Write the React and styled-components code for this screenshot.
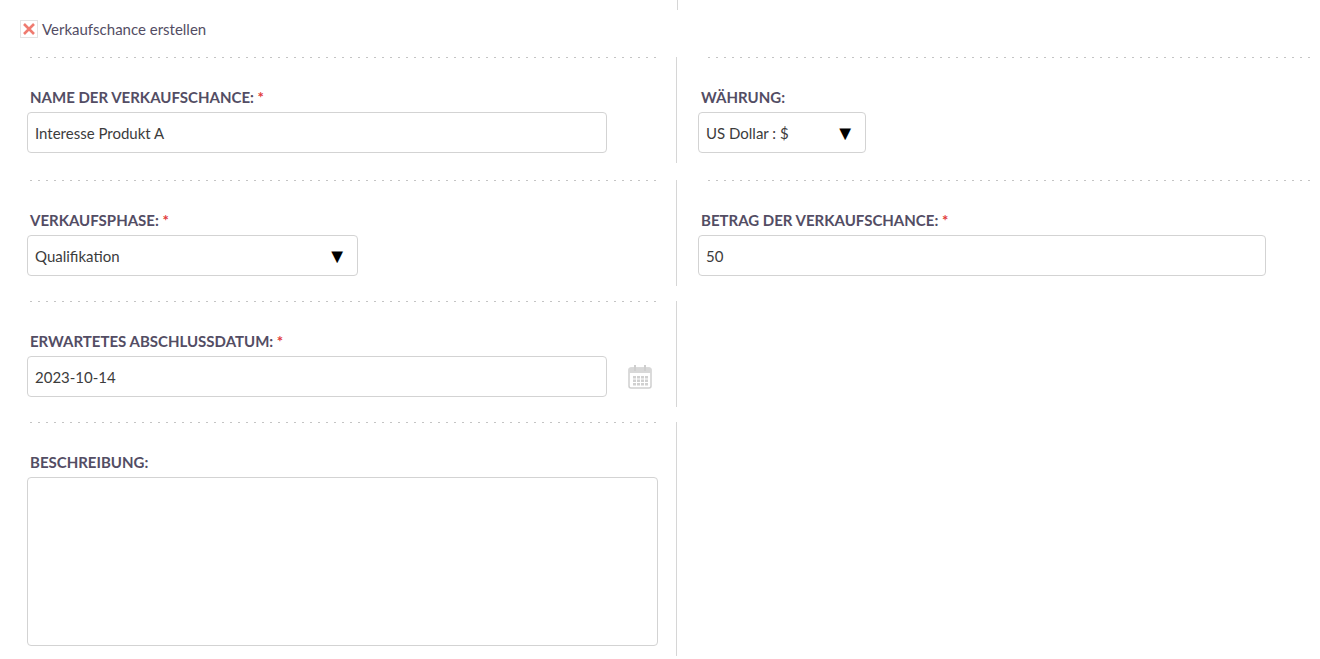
import React from "react";
import styled, { createGlobalStyle } from "styled-components";

const G = createGlobalStyle`
  body{margin:0;background:#fff;font-family:Lato,"Open Sans",sans-serif;color:#534d64;}
`;
const Top = styled.div`width:677px;height:10px;border-right:1px solid #d6d6d6;`;
const Header = styled.div`display:flex;align-items:center;gap:4px;padding:8px 0 0 20px;height:30px;box-sizing:border-box;font-size:15px;color:#534d64;margin-bottom:17px;`;
const Icon = styled.span`display:inline-flex;width:18px;height:18px;border:1px solid #e3e3e3;box-sizing:border-box;align-items:center;justify-content:center;`;
const Row = styled.div`display:flex;margin-bottom:${p=>p.mb ?? 17}px;`;
const Cell = styled.div`
  box-sizing:border-box;
  ${p=>p.left?`width:677px;border-right:1px solid #d6d6d6;padding:0 20px 10px 27px;`:`flex:1;padding:0 8px 0 21px;`}
`;
const Dots = styled.div`height:1px;margin-left:${p=>p.left?0:7}px;background-image:radial-gradient(circle,#c4c4c4 0.8px,transparent 1px);background-size:8px 1px;background-repeat:repeat-x;`;
const Label = styled.div`font-size:15px;font-weight:700;text-transform:uppercase;color:#534d64;margin:28px 0 4px 3px;line-height:22px;`;
const Star = styled.span`color:#e13a3a;`;
const Input = styled.div`
  box-sizing:border-box;height:41px;border:1px solid #d3d3d3;border-radius:4px;
  display:flex;align-items:center;justify-content:space-between;padding:0 10px 0 7px;
  font-size:15px;color:#3c3c3c;width:${p=>p.w}px;background:#fff;
`;
const Area = styled.div`box-sizing:border-box;width:631px;height:169px;border:1px solid #d3d3d3;border-radius:4px;position:relative;`;
const Line = styled.div`display:flex;align-items:center;gap:20px;`;
const Arrow = styled.span`font-size:20px;color:#000;`;

const Cal = () => (
  <svg width="26" height="26" viewBox="0 0 26 26">
    <rect x="2" y="4" width="22" height="20" rx="2" fill="#fff" stroke="#cfcfcf" strokeWidth="1.5"/>
    <rect x="2" y="4" width="22" height="5" fill="#d8d8d8"/>
    <rect x="7" y="1" width="2" height="6" fill="#cfcfcf"/><rect x="17" y="1" width="2" height="6" fill="#cfcfcf"/>
    {[0,1,2].map(r=>[0,1,2,3].map(c=><rect key={r+"-"+c} x={6+c*4} y={12+r*3.5} width="3" height="2.5" fill="#d0d0d0"/>))}
  </svg>
);

export default function App(){
  return (<>
    <G/>
    <Top/>
    <Header>
      <Icon><svg width="14" height="14" viewBox="0 0 14 14"><path d="M2 2L12 12M12 2L2 12" stroke="#ef7b70" strokeWidth="2.6"/></svg></Icon>
      Verkaufschance erstellen
    </Header>
    <Row>
      <Cell left><Dots left/><Label>Name der Verkaufschance: <Star>*</Star></Label><Input w={580}>Interesse Produkt A</Input></Cell>
      <Cell><Dots/><Label>Währung:</Label><Input w={168}>US Dollar : $<Arrow>▼</Arrow></Input></Cell>
    </Row>
    <Row mb={15}>
      <Cell left><Dots left/><Label>Verkaufsphase: <Star>*</Star></Label><Input w={331}>Qualifikation<Arrow>▼</Arrow></Input></Cell>
      <Cell><Dots/><Label>Betrag der Verkaufschance: <Star>*</Star></Label><Input w={568}>50</Input></Cell>
    </Row>
    <Row mb={15}>
      <Cell left><Dots left/><Label>Erwartetes Abschlussdatum: <Star>*</Star></Label><Line><Input w={580}>2023-10-14</Input><Cal/></Line></Cell>
      <Cell/>
    </Row>
    <Row>
      <Cell left><Dots left/><Label>Beschreibung:</Label><Area/></Cell>
      <Cell/>
    </Row>
  </>);
}
